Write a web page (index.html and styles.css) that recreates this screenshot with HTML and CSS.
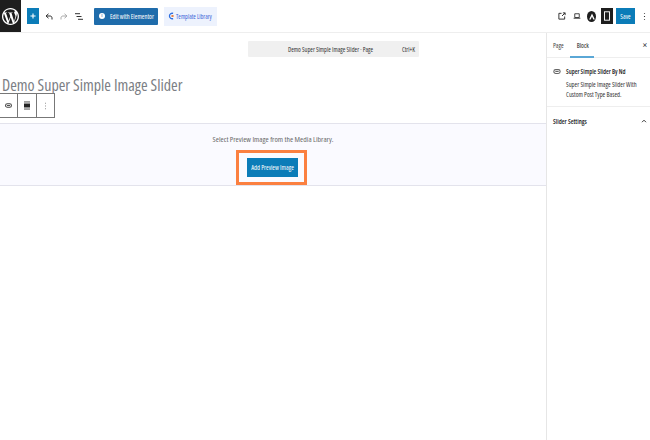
FILE: index.html
```html
<!DOCTYPE html>
<html lang="en">
<head>
<meta charset="utf-8">
<title>Demo Super Simple Image Slider</title>
<link rel="stylesheet" href="styles.css">
</head>
<body>
<header class="topbar">
  <div class="left">
    <div class="wp-logo">
      <svg width="17" height="17" viewBox="2 2 20 20"><path fill="#fff" d="M12 2C6.500 2 2 6.500 2 12s4.500 10 10 10 10-4.500 10-10S17.500 2 12 2zM3.500 12c0-1.200.3-2.400.8-3.500l4.100 11.100C5.400 18.200 3.500 15.300 3.500 12zm8.500 8.500c-.8 0-1.600-.1-2.400-.3l2.600-7.400 2.600 7.300.1.1c-.9.2-1.900.3-2.900.3zm1.200-12.500c.5 0 1-.1 1-.1.5-.1.4-.7-.1-.7 0 0-1.400.1-2.300.1-.8 0-2.200-.1-2.200-.1-.5 0-.5.7-.1.7 0 0 .4.1.9.1l1.300 3.600-1.900 5.500L6.700 8c.5 0 1-.1 1-.1.5-.1.4-.7-.1-.7 0 0-1.400.1-2.300.1h-.5C6.300 4.900 9 3.500 12 3.500c2.200 0 4.300.9 5.800 2.300h-.1c-.8 0-1.400.7-1.400 1.500 0 .7.4 1.300.8 2 .3.600.7 1.300.7 2.400 0 .7-.3 1.600-.7 2.800l-.9 3-3-9.500zm3.100 11.300l2.600-7.500c.5-1.200.6-2.200.6-3 0-.3 0-.6-.1-.9.7 1.200 1 2.600 1 4.100 0 3.100-1.700 5.900-4.100 7.300z"/></svg>
    </div>
    <button class="inserter"><svg width="6" height="6" viewBox="0 0 7 7"><path d="M3.500 .5v6M.5 3.500h6" stroke="#fff" stroke-width="1.300"/></svg></button>
    <svg class="tool undo" width="8" height="7" viewBox="0 0 8 7"><path d="M3.500 .8L1 3l2.500 2.200M1 3h4c1.300 0 2 .8 2 2v1.500" fill="none" stroke="#333" stroke-width="1"/></svg>
    <svg class="tool redo" width="8" height="7" viewBox="0 0 8 7"><path d="M4.500 .8L7 3 4.500 5.200M7 3H3C1.700 3 1 3.800 1 5v1.500" fill="none" stroke="#aaa" stroke-width="1"/></svg>
    <svg class="tool list" width="8" height="7" viewBox="0 0 8 7"><path d="M0 .7h5M1.500 3.500h5M3 6.300h5" fill="none" stroke="#333" stroke-width="1"/></svg>
    <button class="elementor"><span class="e-badge"><span class="e-mark">E</span></span>Edit with Elementor</button>
    <div class="library"><svg width="6" height="8" viewBox="0 0 7 9"><path d="M6 1.500A3.200 3.200 0 1 0 6 7.500" fill="none" stroke="#2f6fe0" stroke-width="1.500"/><path d="M4 3.500h2.500v2H4z" fill="#e8702a"/></svg>Template Library</div>
  </div>
  <div class="right">
    <svg width="8" height="8" viewBox="0 0 9 9"><path d="M4 1.500H1v6.500h6.500V5M4.500 4.500L8 1M5.500 1H8v2.500" fill="none" stroke="#333" stroke-width="1.100"/></svg>
    <svg class="view" width="8" height="6" viewBox="0 0 10 8"><path d="M2 1h6v5H2zM.5 7h9" fill="none" stroke="#333" stroke-width="1.200"/></svg>
    <span class="astra"><svg width="6" height="7" viewBox="0 0 7 8"><path d="M3.500 .5L6.800 7.500H5L3.500 4 2 7.500H.2z" fill="#fff"/></svg></span>
    <span class="device"><svg width="6" height="10" viewBox="0 0 7 11"><rect x=".6" y=".6" width="5.800" height="9.800" fill="none" stroke="#fff" stroke-width="1.100"/></svg></span>
    <button class="save">Save</button>
    <svg class="more" width="3" height="9" viewBox="0 0 3 10"><path d="M1.500 1v1M1.500 4.500v1M1.500 8v1" stroke="#333" stroke-width="1.200"/></svg>
  </div>
</header>
<div class="workspace">
  <main class="canvas">
    <div class="doc-bar-row"><div class="doc-bar"><span class="doc-title">Demo Super Simple Image Slider · Page</span><span class="doc-key">Ctrl+K</span></div></div>
    <h1 class="post-title">Demo Super Simple Image Slider</h1>
    <div class="block-toolbar">
      <div class="cell"><svg width="7" height="5" viewBox="0 0 9 6"><rect x=".7" y=".7" width="7.600" height="4.600" rx="2.300" fill="none" stroke="#444" stroke-width="1.300"/><path d="M2.500 3h4" stroke="#444" stroke-width="1.200"/></svg></div>
      <div class="cell"><svg width="6" height="9" viewBox="0 0 9 12"><path d="M0 .7h9M0 11.300h9" stroke="#222" stroke-width="1.200"/><rect y="3" width="9" height="6" fill="#222"/></svg></div>
      <div class="cell"><svg width="3" height="8" viewBox="0 0 3 10"><path d="M1.500 1v1M1.500 4.500v1M1.500 8v1" stroke="#555" stroke-width="1"/></svg></div>
    </div>
    <section class="placeholder">
      <p class="hint">Select Preview Image from the Media Library.</p>
      <div class="highlight"><button class="add">Add Preview Image</button></div>
    </section>
  </main>
  <aside class="sidebar">
    <div class="tabs"><div class="tab">Page</div><div class="tab active">Block</div><span class="close">×</span></div>
    <div class="block-card">
      <svg class="card-icon" width="8" height="5" viewBox="0 0 9 6"><rect x=".7" y=".7" width="7.600" height="4.600" rx="2.300" fill="none" stroke="#666" stroke-width="1.300"/><path d="M2.500 3h4" stroke="#666" stroke-width="1.200"/></svg>
      <div class="card-text">
        <div class="card-title">Super Simple Slider By Nd</div>
        <div class="card-desc">Super Simple Image Slider With<br>Custom Post Type Based.</div>
      </div>
    </div>
    <div class="panel-head"><span>Slider Settings</span><svg width="6" height="4" viewBox="0 0 7 5"><path d="M1 4l2.500-2.500L6 4" fill="none" stroke="#222" stroke-width="1.100"/></svg></div>
  </aside>
</div>
</body>
</html>
```
FILE: styles.css
```css
* { box-sizing: border-box; }
html, body { margin: 0; height: 100%; }
body {
  width: 650px;
  height: 440px;
  overflow: hidden;
  background: #fff;
  font-family: "Open Sans", "Noto Sans", sans-serif;
  font-stretch: 75%;
  color: #333;
  display: flex;
  flex-direction: column;
}
button { border: 0; padding: 0; font: inherit; font-stretch: 75%; }
.topbar {
  height: 33px;
  flex: none;
  display: flex;
  justify-content: space-between;
  align-items: center;
  border-bottom: 1px solid #eee;
}
.left, .right { display: flex; align-items: center; height: 32px; }
.wp-logo {
  width: 21px;
  height: 32px;
  background: #1e1e1e;
  display: flex;
  align-items: center;
  justify-content: center;
}
.inserter {
  width: 12px;
  height: 16px;
  margin-left: 6px;
  background: #0b7cb8;
  display: flex;
  align-items: center;
  justify-content: center;
}
.tool.undo { margin-left: 6px; }
.tool.redo, .tool.list { margin-left: 7px; }
.elementor {
  display: flex;
  align-items: center;
  gap: 5px;
  margin-left: 11px;
  width: 64px;
  height: 17px;
  padding-left: 5px;
  border-radius: 1px;
  background: #1f6cab;
  color: #fff;
  font-size: 6.5px;
  white-space: nowrap;
}
.e-badge {
  width: 6px;
  height: 6px;
  border-radius: 50%;
  background: #fff;
  display: flex;
  align-items: center;
  justify-content: center;
  flex: none;
}
.e-mark { font-size: 4px; line-height: 1; color: #1f6cab; }
.library {
  display: flex;
  align-items: center;
  gap: 2px;
  margin-left: 6px;
  width: 53px;
  height: 19px;
  padding-left: 4px;
  background: #edf2fd;
  color: #3a63d8;
  font-size: 6.2px;
  white-space: nowrap;
}
.right { padding-right: 4px; }
.view { margin-left: 7px; }
.astra {
  width: 9px;
  height: 11px;
  margin-left: 6px;
  border-radius: 50%;
  background: #1e1e1e;
  display: flex;
  align-items: center;
  justify-content: center;
}
.device {
  width: 12px;
  height: 16px;
  margin-left: 5px;
  background: #1e1e1e;
  display: flex;
  align-items: center;
  justify-content: center;
}
.save {
  width: 19px;
  height: 16px;
  margin-left: 3px;
  background: #0b7cb8;
  color: #fff;
  font-size: 6.500px;
}
.more { margin-left: 8px; }
.workspace { flex: 1; display: flex; min-height: 0; }
.canvas { flex: 1; min-width: 0; }
.doc-bar-row { display: flex; padding: 8px 0 0 248px; }
.doc-bar {
  width: 171px;
  height: 16px;
  background: #f0f0f0;
  border-radius: 1px;
  display: flex;
  align-items: center;
  justify-content: space-between;
  font-size: 6.3px;
  padding: 0 4px 0 40px;
  color: #333;
  white-space: nowrap;
}
.post-title {
  margin: 18px 0 0 2px;
  font-size: 16px;
  line-height: 20px;
  font-weight: 400;
  color: #7b7e84;
  white-space: nowrap;
}
.block-toolbar {
  display: flex;
  width: 55px;
  height: 25px;
  margin-top: -2px;
  position: relative;
  border: 1px solid #777;
  border-left: 0;
  background: #fff;
}
.cell {
  flex: 1;
  display: flex;
  align-items: center;
  justify-content: center;
  border-right: 1px solid #777;
}
.cell:last-child { border-right: 0; }
.placeholder {
  margin-top: 5px;
  height: 63px;
  background: #fafaff;
  border-top: 1px solid #e3e3ec;
  border-bottom: 1px solid #e3e3ec;
  display: flex;
  flex-direction: column;
  align-items: center;
}
.hint {
  margin: 10px 0 0;
  font-size: 7.75px;
  line-height: 10px;
  color: #6a6a6a;
  white-space: nowrap;
}
.highlight {
  margin: 6px 4px 0 0;
  width: 71px;
  height: 36px;
  border: 3px solid #fb8040;
  display: flex;
  align-items: center;
  justify-content: center;
}
.add {
  width: 51px;
  height: 19px;
  margin-left: 3px;
  background: #0b7cb8;
  color: #fff;
  font-size: 6.5px;
  white-space: nowrap;
}
.sidebar {
  width: 104px;
  flex: none;
  border-left: 1px solid #e6e6e6;
  font-size: 6.5px;
}
.tabs {
  height: 25px;
  display: flex;
  align-items: center;
  padding-left: 6px;
  border-bottom: 1px solid #eee;
}
.tab { height: 25px; line-height: 25px; color: #444; }
.tab.active {
  margin-left: 6px;
  width: 24px;
  padding-left: 2px;
  text-align: center;
  color: #222;
  border-bottom: 2px solid #5aa7d6;
}
.close { margin-left: auto; margin-right: 3px; font-size: 10px; color: #222; line-height: 1; }
.block-card {
  display: flex;
  gap: 5px;
  padding: 9px 0 8px 6px;
  height: 49px;
  border-bottom: 1px solid #eee;
}
.card-icon { margin-top: 2px; flex: none; }
.card-title { color: #222; font-weight: 600; font-size: 6.3px; line-height: 10px; }
.card-desc { margin-top: 3px; line-height: 10px; color: #333; }
.panel-head {
  display: flex;
  justify-content: space-between;
  align-items: center;
  height: 28px;
  padding: 0 3px 0 6px;
  font-weight: 600;
  color: #222;
}
```
